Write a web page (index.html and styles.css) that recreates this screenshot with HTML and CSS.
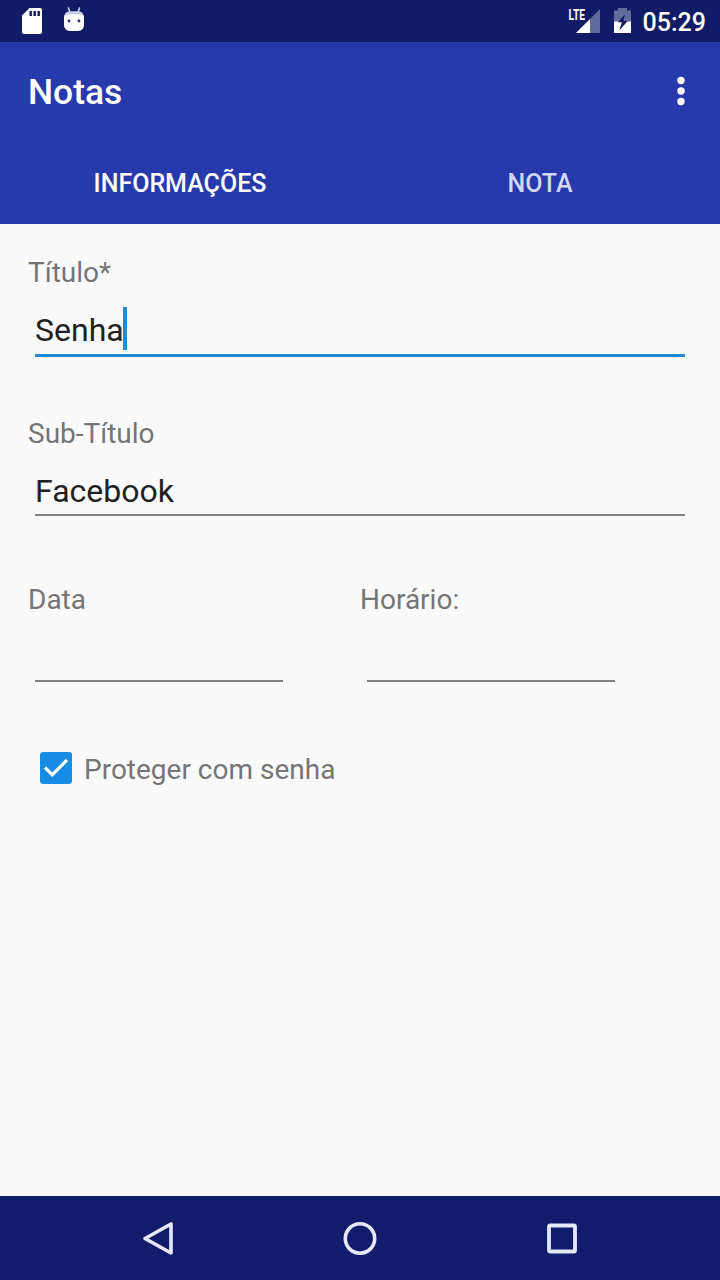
FILE: index.html
```html
<!DOCTYPE html>
<html lang="pt-BR">
<head>
    <meta charset="UTF-8">
    <meta name="viewport" content="width=device-width, initial-scale=1.0">
    <link rel="stylesheet" href="styles.css">
    <title>Notas</title>
</head>
<body>
<div class="screen">
    <div class="status-bar">
        <svg width="100" height="42" viewBox="0 0 100 42">
            <path fill="#fff" fill-rule="evenodd" d="M29.500 8H40a2 2 0 0 1 2 2v22a2 2 0 0 1-2 2H24a2 2 0 0 1-2-2V15.500zM29.500 11v5h2.400v-5zM33.500 11v5h2.400v-5zM37.500 11v5h2.400v-5z"/>
            <path d="M68.500 8l1.300 4M79.500 8l-1.300 4" stroke="#d4d6ec" stroke-width="1.500" stroke-linecap="round"/>
            <path fill="#c9cbe2" d="M64.500 15.500q.5-4 5-4.300h9q4.500.3 5 4.300z"/>
            <path fill="#fff" d="M64 15.500q10-2.500 20 0v9q0 6.500-6 6.500h-8q-6 0-6-6.500z"/>
            <circle cx="69" cy="21" r="1.400" fill="#242b70"/>
            <circle cx="79" cy="21" r="1.400" fill="#242b70"/>
        </svg>
        <div class="status-right">
            <svg width="66" height="42" viewBox="568 0 66 42">
                <path fill="#646a9b" d="M600 9v24h-24z"/>
                <path fill="#fff" d="M590 19v14h-14z"/>
                <text class="lte" x="568.500" y="19.500" textLength="16.500" lengthAdjust="spacingAndGlyphs">LTE</text>
                <path fill="#646a9b" d="M618 8h9v2.500h4V22h-17V10.500h4z"/>
                <path fill="#fff" d="M614 21.500h17V33h-17z"/>
                <path fill="#131b64" d="M625 14.500l-7.200 7.700h4l-2.500 8.300 8.400-9.500h-4.200z"/>
            </svg>
            <span class="clock">05:29</span>
        </div>
    </div>
    <div class="header">
        <div class="toolbar">
            <span class="title">Notas</span>
            <svg width="8" height="30" viewBox="0 0 8 30">
                <circle cx="4" cy="4.500" r="3.700" fill="#fff"/>
                <circle cx="4" cy="15" r="3.700" fill="#fff"/>
                <circle cx="4" cy="25.500" r="3.700" fill="#fff"/>
            </svg>
        </div>
        <div class="tabs">
            <div class="tab active">INFORMAÇÕES</div>
            <div class="tab">NOTA</div>
        </div>
    </div>
    <div class="content">
        <div class="group">
            <div class="label">Título*</div>
            <div class="field focused">Senha<span class="caret"></span></div>
        </div>
        <div class="group">
            <div class="label">Sub-Título</div>
            <div class="field">Facebook</div>
        </div>
        <div class="row">
            <div class="group half">
                <div class="label">Data</div>
                <div class="field"></div>
            </div>
            <div class="group half">
                <div class="label">Horário:</div>
                <div class="field"></div>
            </div>
        </div>
        <div class="check-row">
            <svg width="32" height="32" viewBox="0 0 32 32">
                <rect width="32" height="32" rx="3" fill="#168de2"/>
                <path d="M5 15.500l7.300 7.300L27 8" fill="none" stroke="#fff" stroke-width="3.200"/>
            </svg>
            <span class="label">Proteger com senha</span>
        </div>
    </div>
    <div class="nav-bar">
        <svg width="34" height="36" viewBox="0 0 34 36">
            <path d="M30 4v29L4 18.500z" fill="none" stroke="#e6e8fa" stroke-width="3.600" stroke-linejoin="round"/>
        </svg>
        <svg width="34" height="36" viewBox="0 0 34 36">
            <circle cx="17" cy="18.500" r="14.700" fill="none" stroke="#e6e8fa" stroke-width="3.600"/>
        </svg>
        <svg width="34" height="36" viewBox="0 0 34 36">
            <rect x="4" y="5.500" width="26" height="26" rx="1" fill="none" stroke="#e6e8fa" stroke-width="3.800"/>
        </svg>
    </div>
</div>
</body>
</html>
```

FILE: styles.css
```css
* {box-sizing: border-box;}
body {margin: 0; font-family: Roboto, "Noto Sans", sans-serif; background-color: #fafafa;}
svg {display: block; flex-shrink: 0;}
.screen {display: flex; flex-direction: column; width: 720px; height: 1280px; overflow: hidden;}

/* status bar */
.status-bar {display: flex; justify-content: space-between; height: 42px; padding-right: 14px; background-color: #121b66;}
.status-right {display: flex; gap: 9px;}
.clock {color: #fff; font-size: 25px; font-weight: 500; line-height: 45px;}
.lte {fill: #fff; font-size: 14px; font-weight: 700;}

/* header */
.header {height: 182px; background-color: #273aab; color: #fff;}
.toolbar {display: flex; align-items: center; justify-content: space-between; height: 98px; padding: 0 35px 0 28px;}
.title {font-size: 35.4px; font-weight: 500; line-height: 42px; padding-top: 2px;}
.tabs {display: flex; height: 84px;}
.tab {flex: 1; text-align: center; font-size: 25px; font-weight: 500; line-height: 88px; color: #d2d6f5;}
.active {color: #fff;}

/* form */
.content {flex: 1; padding: 32px 28px 0;}
.label {font-size: 28px; line-height: 33px; color: #757575;}
.group {height: 161px;}
.field {display: flex; height: 66px; margin: 0 7px; padding-top: 18px; font-size: 32px; line-height: 46px; color: #212121; border-bottom: 2px solid #808080;}
.focused {height: 68px; border-bottom: 3px solid #208ad2;}
.caret {width: 4px; height: 43px; margin-left: -1px; background-color: #208ad2;}
.row {display: flex; gap: 70px; padding-top: 5px;}
.half {width: 262px;}
.check-row {display: flex; align-items: center; gap: 12px; height: 46px; padding: 0 12px; margin-top: 1px;}
.check-row .label {padding-top: 3px;}

/* bottom navigation */
.nav-bar {display: flex; justify-content: space-between; align-items: center; height: 84px; padding: 0 141px; background-color: #111c6a;}
```
